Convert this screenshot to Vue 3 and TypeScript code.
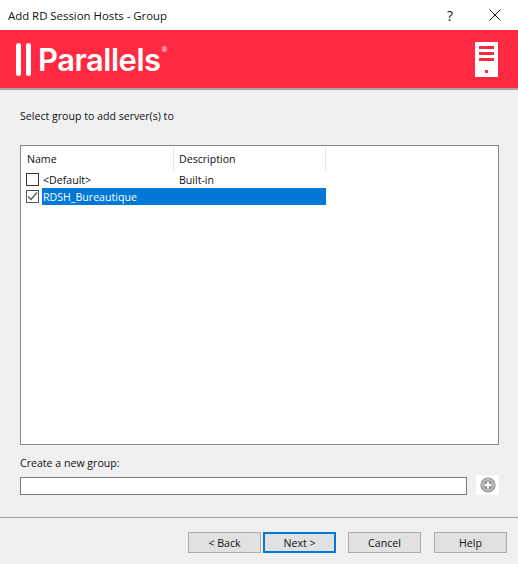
<template>
  <div class="dialog">
    <header class="titlebar">
      <span class="title">Add RD Session Hosts - Group</span>
      <span class="help-mark">?</span>
      <svg class="close" width="12" height="12" viewBox="0 0 12 12">
        <path d="M0.5 0.5 L11.5 11.5 M11.5 0.5 L0.5 11.5" stroke="#111" stroke-width="1" fill="none" />
      </svg>
    </header>

    <div class="banner">
      <div class="logo">
        <span class="logo-bars"><i></i><i></i></span>
        <span class="logo-text">Parallels</span>
        <span class="logo-reg">®</span>
      </div>
      <svg class="server" width="23" height="35" viewBox="0 0 23 35">
        <rect width="23" height="35" fill="#fff" />
        <rect x="4" y="4" width="15" height="3" fill="#ff2a41" />
        <rect x="4" y="10" width="15" height="3" fill="#ff2a41" />
        <rect x="4" y="16" width="15" height="3" fill="#ff2a41" />
        <rect x="10" y="28" width="3" height="3" fill="#ff2a41" />
      </svg>
    </div>

    <main class="content">
      <p class="prompt">Select group to add server(s) to</p>

      <div class="list">
        <div class="list-head">
          <span class="col">Name</span>
          <span class="col">Description</span>
        </div>
        <div v-for="g in groups" :key="g.name" class="row">
          <span class="check" :class="{ on: g.checked }">
            <svg v-if="g.checked" width="11" height="11" viewBox="0 0 11 11">
              <path d="M1 5.5 L4 8.5 L10 1.5" stroke="#555" stroke-width="1.2" fill="none" />
            </svg>
          </span>
          <div class="cells" :class="{ selected: g.checked }">
            <span class="cell-name">{{ g.name }}</span>
            <span class="cell-desc">{{ g.description }}</span>
          </div>
        </div>
      </div>

      <label class="new-label">Create a new group:</label>
      <div class="new-row">
        <input class="new-input" type="text" />
        <span class="add">
          <svg width="16" height="16" viewBox="0 0 16 16">
            <circle cx="8" cy="8" r="7" fill="#c4c4c4" stroke="#8c8c8c" stroke-width="1.2" />
            <circle cx="8" cy="8" r="4.8" fill="#9a9a9a" />
            <path d="M8 4.5 V11.5 M4.5 8 H11.5" stroke="#fff" stroke-width="1.8" />
          </svg>
        </span>
      </div>
    </main>

    <footer class="footer">
      <button type="button" class="btn">&lt; Back</button>
      <button type="button" class="btn primary">Next &gt;</button>
      <button type="button" class="btn gap">Cancel</button>
      <button type="button" class="btn gap2">Help</button>
    </footer>
  </div>
</template>

<script setup lang="ts">
const groups = [
  { name: '<Default>', description: 'Built-in', checked: false },
  { name: 'RDSH_Bureautique', description: '', checked: true },
]
</script>

<style scoped>
.dialog {
  width: 518px;
  height: 564px;
  display: flex;
  flex-direction: column;
  background: #f0f0f0;
  font-family: "Open Sans", "Noto Sans", sans-serif;
  font-size: 10.6px;
  color: #111;
  overflow: hidden;
}

.titlebar {
  height: 30px;
  flex: none;
  display: flex;
  align-items: center;
  background: #fff;
  padding-left: 8px;
  font-size: 11.4px;
}

.title {
  flex: 1;
}

.help-mark {
  font-size: 14px;
  margin-right: 36px;
}

.close {
  margin-right: 17px;
}

.banner {
  height: 58px;
  flex: none;
  display: flex;
  align-items: center;
  justify-content: space-between;
  background: #ff2a41;
  border-bottom: 2px solid #a6a6a6;
  padding: 0 20px 0 16px;
}

.logo {
  display: flex;
  align-items: center;
  color: #fff;
}

.logo-bars {
  display: flex;
  gap: 5px;
  margin-right: 7px;
}

.logo-bars i {
  width: 5px;
  height: 33px;
  border-radius: 3px;
  background: #fff;
}

.logo-text {
  font-family: Inter, Roboto, sans-serif;
  font-size: 31px;
  font-weight: 600;
  letter-spacing: -0.5px;
  line-height: 33px;
}

.logo-reg {
  font-size: 7px;
  align-self: flex-start;
  margin: 2px 0 0 1px;
}

.content {
  flex: 1;
  display: flex;
  flex-direction: column;
  padding: 18px 19px 0 20px;
}

.prompt {
  margin: 0 0 20px;
  height: 17px;
  line-height: 17px;
}

.list {
  height: 300px;
  box-sizing: border-box;
  border: 1px solid #828790;
  background: #fff;
  padding-top: 1px;
  margin-bottom: 10px;
}

.list-head {
  display: flex;
  height: 24px;
  width: 305px;
}

.col {
  width: 153px;
  box-sizing: border-box;
  padding: 5px 0 0 6px;
  border-right: 1px solid #e5e5e5;
}

.col + .col {
  width: 152px;
  padding-left: 5px;
}

.row {
  display: flex;
  align-items: center;
  height: 17px;
  width: 305px;
}

.check {
  width: 13px;
  height: 13px;
  box-sizing: border-box;
  flex: none;
  margin: 0 3px 0 5px;
  border: 1px solid #333;
  background: #fff;
  display: flex;
  align-items: center;
  justify-content: center;
}

.check.on {
  border-color: #555;
}

.cells {
  flex: 1;
  display: flex;
  height: 17px;
  line-height: 19px;
}

.cells.selected {
  background: #0078d7;
  color: #fff;
}

.cell-name {
  width: 131px;
  padding-left: 1px;
}

.cell-desc {
  padding-left: 5px;
}

.new-label {
  height: 17px;
  line-height: 17px;
}

.new-row {
  display: flex;
  align-items: flex-start;
  margin-top: 5px;
}

.new-input {
  width: 447px;
  height: 18px;
  box-sizing: border-box;
  border: 1px solid #7a7a7a;
  background: #fff;
  padding: 0;
  margin: 0;
  outline: none;
}

.add {
  width: 23px;
  height: 20px;
  margin: -2px 0 0 9px;
  background: #fff;
  display: flex;
  align-items: center;
  justify-content: center;
}

.footer {
  height: 47px;
  flex: none;
  box-sizing: border-box;
  border-top: 1px solid #a0a0a0;
  display: flex;
  align-items: flex-start;
  padding: 14px 0 0 188px;
}

.btn {
  width: 73px;
  height: 21px;
  box-sizing: border-box;
  border: 1px solid #adadad;
  background: #e1e1e1;
  font: inherit;
  color: #111;
  padding: 0;
  margin-right: 2px;
}

.btn.primary {
  border: 2px solid #0078d7;
}

.btn.gap {
  margin-left: 10px;
}

.btn.gap2 {
  margin-left: 11px;
}
</style>

<style>
body {
  margin: 0;
}
</style>
